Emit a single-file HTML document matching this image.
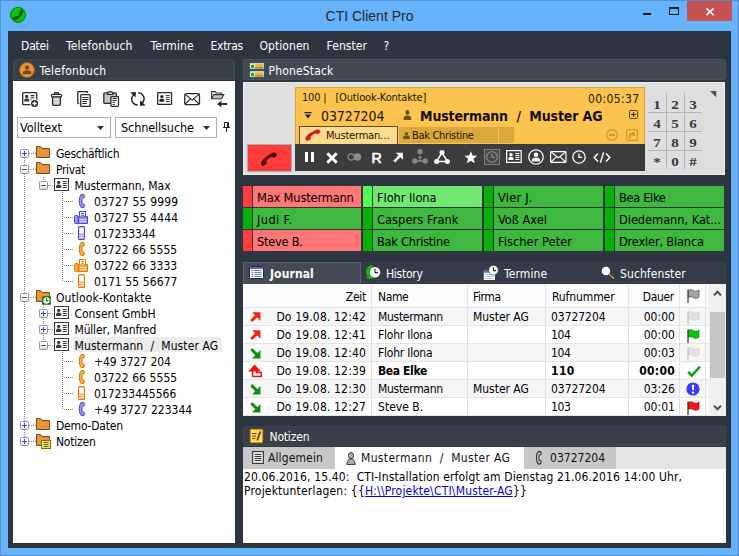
<!DOCTYPE html>
<html lang="de">
<head>
<meta charset="utf-8">
<title>CTI Client Pro</title>
<style>
html,body{margin:0;padding:0;}
body{width:739px;height:556px;position:relative;overflow:hidden;background:#67b3fb;font-family:"DejaVu Sans Condensed","Liberation Sans",sans-serif;font-size:12px;line-height:16px;color:#000;}
.a{position:absolute;white-space:pre;}
.b{position:absolute;}
svg{position:absolute;overflow:visible;}
#frame{left:0;top:0;width:737px;height:554px;border:1px solid #4f90d2;}
#client{left:8px;top:31px;width:723px;height:517px;background:#2d3640;}
.title{left:0;width:739px;top:7px;text-align:center;font-family:"Liberation Sans",sans-serif;font-size:14px;line-height:18px;color:#262626;}
.menu{color:#fff;top:38px;}
.hdr{background:#424952;height:19px;border:1px solid #4a525c;border-radius:2px;}
.hdl{background:#383f49;border-color:#3e4650;}
.hdrt{color:#fff;}
.white{background:#fff;}
.ex{width:7px;height:7px;border:1px solid #969696;background:linear-gradient(180deg,#fff 0,#fff 45%,#dedede 100%);border-radius:1.5px;}
.hd{height:1px;background:repeating-linear-gradient(90deg,#8a8a8a 0 1px,transparent 1px 2px);}
.vd{width:1px;background:repeating-linear-gradient(180deg,#8a8a8a 0 1px,transparent 1px 2px);}
.cb{border:1px solid #abadb3;background:#fff;}
.tr{color:#000;}
.tm{width:108px;height:21px;line-height:23px;padding-left:4px;box-sizing:border-box;font-size:12.7px;color:#000;overflow:hidden;}
.dp{width:18px;text-align:center;font-family:"Liberation Serif","DejaVu Serif",serif;font-weight:bold;font-size:13.5px;line-height:16px;color:#3a3444;transform:scaleX(1.12);}
</style>
</head>
<body>
<div class="b" id="frame"></div>
<div class="a title">CTI Client Pro</div>
<div class="b" id="client"></div>

<!-- SECTION:TITLEBAR -->
<svg style="left:10px;top:7px" width="16" height="16" viewBox="0 0 16 16"><circle cx="8" cy="7.9" r="7.5" fill="#04c804" stroke="#067a06" stroke-width="1"/><path d="M5 11.3 Q10.4 10.8 11.5 5" fill="none" stroke="#045404" stroke-width="2"/><path d="M4.4 11.6 L6.6 10.6 M10.6 6.6 L11.7 4.5" fill="none" stroke="#045404" stroke-width="3.2" stroke-linecap="round"/></svg>
<div class="b" style="left:643px;top:13px;width:8px;height:2px;background:#1a1a1a"></div>
<div class="b" style="left:669px;top:7px;width:8px;height:5px;border:1px solid #1a1a1a;border-top-width:2px"></div>
<div class="b" style="left:687px;top:1px;width:45px;height:20px;background:#c75050"></div>
<svg style="left:706px;top:8px" width="8" height="8" viewBox="0 0 8 8"><path d="M0.4 0.4 L7.6 7.2 M7.6 0.4 L0.4 7.2" stroke="#fff" stroke-width="1.6" fill="none"/></svg>
<!-- SECTION:MENU -->
<div class="a menu" style="letter-spacing:-0.18px;left:21px">Datei</div>
<div class="a menu" style="letter-spacing:0.18px;left:66px">Telefonbuch</div>
<div class="a menu" style="letter-spacing:0.12px;left:150.5px">Termine</div>
<div class="a menu" style="letter-spacing:-0.29px;left:210.5px">Extras</div>
<div class="a menu" style="letter-spacing:0.06px;left:259.5px">Optionen</div>
<div class="a menu" style="letter-spacing:0.09px;left:326.5px">Fenster</div>
<div class="a menu" style="left:383.5px">?</div>

<!-- SECTION:LEFTPANEL -->
<div class="b hdr hdl" style="left:13px;top:59px;width:220px"></div>
<div class="a hdrt" style="letter-spacing:0.21px;left:39.5px;top:63px">Telefonbuch</div>
<div class="b white" style="left:13px;top:81px;width:222px;height:462px"></div>
<svg style="left:19px;top:62px" width="16" height="16" viewBox="0 0 16 16"><circle cx="8" cy="8" r="7.4" fill="#e8943a" stroke="#a8641a" stroke-width="0.9"/><circle cx="8" cy="5.6" r="2.2" fill="#7a4a14"/><path d="M3.8 12.2 V10.6 C3.8 8.8 5.6 8.4 8 8.4 C10.4 8.4 12.2 8.8 12.2 10.6 V12.2 Z" fill="#7a4a14"/></svg>
<!-- toolbar icons -->
<svg style="left:22px;top:92px" width="17" height="16" viewBox="0 0 17 16"><rect x="0.7" y="0.7" width="14" height="12" rx="0.8" fill="#fff" stroke="#2a2a2a" stroke-width="1.3"/><circle cx="4.7" cy="4.5" r="1.7" fill="#333"/><path d="M2.2 9.6 V8.6 C2.2 7 3.4 6.6 4.7 6.6 C6 6.6 7.2 7 7.2 8.6 V9.6 Z" fill="#333"/><path d="M8.6 3.6 H12.4 M8.6 5.8 H12.4 M8.6 8 H10" stroke="#2a2a2a" stroke-width="1.1"/><circle cx="12.6" cy="11.6" r="4.4" fill="#fff"/><circle cx="12.6" cy="11.6" r="3.5" fill="#222"/><path d="M12.6 9.4 V13.8 M10.4 11.6 H14.8" stroke="#fff" stroke-width="1.5"/></svg>
<svg style="left:50px;top:92px" width="13" height="14" viewBox="0 0 13 14"><rect x="4.4" y="0.6" width="4.2" height="2.2" rx="0.6" fill="#ccc" stroke="#2a2a2a" stroke-width="1.1"/><path d="M2.6 4.6 V12 Q2.6 13.4 4 13.4 H9 Q10.4 13.4 10.4 12 V4.6 Z" fill="#d6d6d6" stroke="#2a2a2a" stroke-width="1.3"/><rect x="1.3" y="2.3" width="10.4" height="2.5" rx="1" fill="#fff" stroke="#2a2a2a" stroke-width="1.2"/></svg>
<svg style="left:77px;top:91px" width="15" height="16" viewBox="0 0 15 16"><path d="M10.6 2 V1.4 Q10.6 0.6 9.8 0.6 H1.6 Q0.8 0.6 0.8 1.4 V11.8 Q0.8 12.6 1.6 12.6 H2.2" fill="none" stroke="#2a2a2a" stroke-width="1.3"/><rect x="3.8" y="3.7" width="9.4" height="11.6" rx="0.9" fill="#fff" stroke="#2a2a2a" stroke-width="1.3"/><path d="M5.4 6.5 H11.6 M5.4 8.5 H11.6 M5.4 10.5 H9.8 M5.4 12.5 H9.8" stroke="#2a2a2a" stroke-width="1"/></svg>
<svg style="left:103px;top:91px" width="17" height="16" viewBox="0 0 17 16"><rect x="0.8" y="1.8" width="12.6" height="10.6" rx="1.2" fill="#c2c2c2" stroke="#2a2a2a" stroke-width="1.3"/><path d="M4.4 3.4 Q4.4 0.6 7.2 0.6 Q10 0.6 10 3.4 Z" fill="#fff" stroke="#2a2a2a" stroke-width="1.1"/><rect x="7.9" y="5.6" width="7.6" height="9.8" rx="0.8" fill="#fff" stroke="#2a2a2a" stroke-width="1.3"/><path d="M9.6 7.5 H13.8 M9.6 9.5 H13.8 M9.6 11.5 H11.8 M9.6 13.4 H11.8" stroke="#2a2a2a" stroke-width="1"/></svg>
<svg style="left:130px;top:92px" width="16" height="14" viewBox="0 0 16 14"><path d="M7.6 13.1 C4 12.7 1.4 9.8 1.7 6.6 C1.9 5 2.6 3.8 3.6 3" fill="none" stroke="#262626" stroke-width="1.5"/><path d="M0.2 0.3 L5.9 0 L5.5 5.6 Z" fill="#262626"/><path d="M8.2 0.7 C11.8 1.1 14.4 4 14.1 7.2 C13.9 8.8 13.2 10 12.2 10.8" fill="none" stroke="#262626" stroke-width="1.5"/><path d="M15.6 13.5 L9.9 13.8 L10.3 8.2 Z" fill="#262626"/></svg>
<svg style="left:157px;top:92px" width="16" height="13" viewBox="0 0 16 13"><rect x="0.7" y="0.7" width="13.8" height="11.6" rx="0.6" fill="#fff" stroke="#2a2a2a" stroke-width="1.3"/><circle cx="4.8" cy="4.6" r="1.7" fill="#2a2a2a"/><path d="M2.4 9.8 V8.6 C2.4 7 3.6 6.7 4.8 6.7 C6 6.7 7.2 7 7.2 8.6 V9.8 Z" fill="#2a2a2a"/><path d="M8.8 3.6 H12.6 M8.8 5.6 H12.6 M8.8 7.6 H12.6 M8.8 9.6 H12.6" stroke="#2a2a2a" stroke-width="1"/></svg>
<svg style="left:184px;top:93px" width="17" height="12" viewBox="0 0 17 12"><rect x="0.7" y="0.7" width="14.8" height="11" rx="1.6" fill="#fff" stroke="#2a2a2a" stroke-width="1.3"/><path d="M1.2 1.4 L8.1 7 L15 1.4 M1.2 11 L6.4 5.8 M15 11 L9.8 5.8" fill="none" stroke="#2a2a2a" stroke-width="1.1"/></svg>
<svg style="left:211px;top:91px" width="17" height="16" viewBox="0 0 17 16"><path d="M0.6 7.8 V0.6 H4.2 L5.4 2 H10.6 V3.6" fill="#fff" stroke="#333" stroke-width="1.1"/><path d="M0.6 7.8 L2.8 3.6 H12.8 L10.6 7.8 Z" fill="#c8c8c8" stroke="#333" stroke-width="1.1"/><path d="M16.2 13 H9.4" stroke="#222" stroke-width="1.8"/><path d="M6.2 13 L10.4 9.8 V16.2 Z" fill="#222"/></svg>
<!-- combos -->
<div class="b cb" style="left:17px;top:117px;width:92px;height:19px"></div>
<div class="a" style="letter-spacing:-0.04px;left:20px;top:120px;font-size:12.6px">Volltext</div>
<svg style="left:97px;top:126px" width="7" height="4" viewBox="0 0 7 4"><path d="M0 0 H7 L3.5 4 Z" fill="#333"/></svg>
<div class="b cb" style="left:115px;top:117px;width:100px;height:19px"></div>
<div class="a" style="letter-spacing:-0.14px;left:121px;top:120px;font-size:12.6px">Schnellsuche</div>
<svg style="left:203px;top:126px" width="7" height="4" viewBox="0 0 7 4"><path d="M0 0 H7 L3.5 4 Z" fill="#333"/></svg>
<svg style="left:222px;top:122px" width="9" height="10" viewBox="0 0 9 10"><path d="M2.5 0.5 H6.5 M2.5 0.5 V5 M6.5 0.5 V5 M5.5 0.5 V5 M1 5.5 H8 M4.5 5.5 V10" fill="none" stroke="#222" stroke-width="1"/></svg>
<!-- tree -->
<div class="b vd" style="left:24px;top:158px;height:279px"></div>
<div class="b vd" style="left:43px;top:177px;height:4px"></div>
<div class="b vd" style="left:62px;top:192px;height:90px"></div>
<div class="b vd" style="left:43px;top:305px;height:44px"></div>
<div class="b vd" style="left:62px;top:352px;height:58px"></div>
<div class="b hd" style="left:29px;top:153px;width:7px"></div>
<div class="b ex" style="left:20px;top:149px"></div><div class="b" style="left:22px;top:153px;width:5px;height:1px;background:#2a50a8"></div><div class="b" style="left:24px;top:151px;width:1px;height:5px;background:#2a50a8"></div>
<svg style="left:36px;top:146px" width="15" height="13" viewBox="0 0 15 13"><path d="M0.5 0.5 H4.6 L6.2 2.5 H13.5 V11.5 H0.5 Z" fill="#e8943a" stroke="#7a4a14" stroke-width="1"/></svg>
<div class="a tr" style="letter-spacing:-0.28px;left:56px;top:146px">Geschäftlich</div>
<div class="b hd" style="left:29px;top:169px;width:7px"></div>
<div class="b ex" style="left:20px;top:165px"></div><div class="b" style="left:22px;top:169px;width:5px;height:1px;background:#2a50a8"></div>
<svg style="left:36px;top:162px" width="15" height="13" viewBox="0 0 15 13"><path d="M0.5 0.5 H4.6 L6.2 2.5 H13.5 V11.5 H0.5 Z" fill="#e8943a" stroke="#7a4a14" stroke-width="1"/></svg>
<div class="a tr" style="letter-spacing:-0.34px;left:56px;top:162px">Privat</div>
<div class="b hd" style="left:48px;top:185px;width:6px"></div>
<div class="b ex" style="left:39px;top:181px"></div><div class="b" style="left:41px;top:185px;width:5px;height:1px;background:#2a50a8"></div>
<svg style="left:54px;top:178px" width="15" height="13" viewBox="0 0 15 13"><rect x="0.5" y="0.5" width="14" height="12" fill="#fff" stroke="#3a3a3a" stroke-width="1"/><circle cx="4.7" cy="4.4" r="1.7" fill="#3a3a3a"/><path d="M2 10 V8.8 C2 7.2 3.4 6.6 4.7 6.6 C6 6.6 7.4 7.2 7.4 8.8 V10 Z" fill="#3a3a3a"/><path d="M8.8 3.5 H12.8 M8.8 5.5 H12.8 M8.8 7.5 H12.8 M8.8 9.5 H12.8" stroke="#3a3a3a" stroke-width="1"/></svg>
<div class="a tr" style="letter-spacing:-0.06px;left:74.5px;top:178px">Mustermann, Max</div>
<div class="b hd" style="left:64px;top:201px;width:10px"></div>
<svg style="left:78px;top:194px" width="7" height="14" viewBox="0 0 7 14"><path d="M3.2 0.5 H5.4 Q6.3 0.5 6.3 1.3 V3.2 Q6.3 3.9 5.5 4 Q4 4.2 4 5.6 V8.4 Q4 9.8 5.5 10 Q6.3 10.1 6.3 10.8 V12.7 Q6.3 13.5 5.4 13.5 H3.2 Q1.3 11.6 1.3 7 Q1.3 2.4 3.2 0.5 Z" fill="#9a9af2" stroke="#4848c8" stroke-width="1"/></svg>
<div class="a tr" style="letter-spacing:0.14px;left:94px;top:194px">03727 55 9999</div>
<div class="b hd" style="left:64px;top:217px;width:10px"></div>
<svg style="left:74px;top:211px" width="14" height="13" viewBox="0 0 14 13"><path d="M4.5 5.5 H13.5 V12.5 H4.5 Z" fill="#9a9af2" stroke="#4848c8"/><rect x="0.5" y="4.5" width="3.6" height="8" rx="1" fill="#9a9af2" stroke="#4848c8"/><rect x="5.5" y="0.5" width="6" height="5.4" fill="#fff" stroke="#4848c8"/><path d="M7 2.5 H10 M7 4.3 H10" stroke="#4848c8" stroke-width="1"/><path d="M6.4 8.5 h1.2 m1 0 h1.2 m1 0 h1.2 M6.4 10.6 h1.2 m1 0 h1.2 m1 0 h1.2" stroke="#fff" stroke-width="1.2"/></svg>
<div class="a tr" style="letter-spacing:0.14px;left:94px;top:210px">03727 55 4444</div>
<div class="b hd" style="left:64px;top:233px;width:10px"></div>
<svg style="left:78px;top:226px" width="7" height="14" viewBox="0 0 7 14"><rect x="0.5" y="0.5" width="6" height="13" rx="0.6" fill="#9a9af2" stroke="#4848c8"/><rect x="1.3" y="1.6" width="4.4" height="6" fill="#fff"/><path d="M1.4 9.6 h1.1 m0.5 0 h1.1 m0.5 0 h1.1 M1.4 11.6 h1.1 m0.5 0 h1.1 m0.5 0 h1.1" stroke="#fff" stroke-width="1.1"/></svg>
<div class="a tr" style="letter-spacing:-0.02px;left:94px;top:226px">017233344</div>
<div class="b hd" style="left:64px;top:249px;width:10px"></div>
<svg style="left:78px;top:242px" width="7" height="14" viewBox="0 0 7 14"><path d="M3.2 0.5 H5.4 Q6.3 0.5 6.3 1.3 V3.2 Q6.3 3.9 5.5 4 Q4 4.2 4 5.6 V8.4 Q4 9.8 5.5 10 Q6.3 10.1 6.3 10.8 V12.7 Q6.3 13.5 5.4 13.5 H3.2 Q1.3 11.6 1.3 7 Q1.3 2.4 3.2 0.5 Z" fill="#f9aa4c" stroke="#e07a00" stroke-width="1"/></svg>
<div class="a tr" style="letter-spacing:0.07px;left:94px;top:242px">03722 66 5555</div>
<div class="b hd" style="left:64px;top:265px;width:10px"></div>
<svg style="left:74px;top:259px" width="14" height="13" viewBox="0 0 14 13"><path d="M4.5 5.5 H13.5 V12.5 H4.5 Z" fill="#f9aa4c" stroke="#e07a00"/><rect x="0.5" y="4.5" width="3.6" height="8" rx="1" fill="#f9aa4c" stroke="#e07a00"/><rect x="5.5" y="0.5" width="6" height="5.4" fill="#fff" stroke="#e07a00"/><path d="M7 2.5 H10 M7 4.3 H10" stroke="#e07a00" stroke-width="1"/><path d="M6.4 8.5 h1.2 m1 0 h1.2 m1 0 h1.2 M6.4 10.6 h1.2 m1 0 h1.2 m1 0 h1.2" stroke="#fff" stroke-width="1.2"/></svg>
<div class="a tr" style="letter-spacing:0.07px;left:94px;top:258px">03722 66 3333</div>
<div class="b hd" style="left:64px;top:281px;width:10px"></div>
<svg style="left:78px;top:274px" width="7" height="14" viewBox="0 0 7 14"><rect x="0.5" y="0.5" width="6" height="13" rx="0.6" fill="#f9aa4c" stroke="#e07a00"/><rect x="1.3" y="1.6" width="4.4" height="6" fill="#fff"/><path d="M1.4 9.6 h1.1 m0.5 0 h1.1 m0.5 0 h1.1 M1.4 11.6 h1.1 m0.5 0 h1.1 m0.5 0 h1.1" stroke="#fff" stroke-width="1.1"/></svg>
<div class="a tr" style="letter-spacing:0.09px;left:94px;top:274px">0171 55 56677</div>
<div class="b hd" style="left:29px;top:297px;width:7px"></div>
<div class="b ex" style="left:20px;top:293px"></div><div class="b" style="left:22px;top:297px;width:5px;height:1px;background:#2a50a8"></div>
<svg style="left:36px;top:290px" width="15" height="13" viewBox="0 0 15 13"><path d="M0.5 0.5 H4.6 L6.2 2.5 H13.5 V11.5 H0.5 Z" fill="#e8943a" stroke="#7a4a14" stroke-width="1"/></svg>
<svg style="left:42px;top:296px" width="9" height="9" viewBox="0 0 9 9"><rect x="0.2" y="0.2" width="8.6" height="8.6" rx="0.6" fill="#0c6c1c"/><circle cx="4.5" cy="4.5" r="3.2" fill="#e4ffe4"/><path d="M4.5 2.4 V4.9 H6.4" stroke="#0a3a0a" stroke-width="1" fill="none"/></svg>
<div class="a tr" style="letter-spacing:0.10px;left:56px;top:290px">Outlook-Kontakte</div>
<div class="b hd" style="left:48px;top:313px;width:6px"></div>
<div class="b ex" style="left:39px;top:309px"></div><div class="b" style="left:41px;top:313px;width:5px;height:1px;background:#2a50a8"></div><div class="b" style="left:43px;top:311px;width:1px;height:5px;background:#2a50a8"></div>
<svg style="left:54px;top:306px" width="15" height="13" viewBox="0 0 15 13"><rect x="0.5" y="0.5" width="14" height="12" fill="#fff" stroke="#3a3a3a" stroke-width="1"/><circle cx="4.7" cy="4.4" r="1.7" fill="#3a3a3a"/><path d="M2 10 V8.8 C2 7.2 3.4 6.6 4.7 6.6 C6 6.6 7.4 7.2 7.4 8.8 V10 Z" fill="#3a3a3a"/><path d="M8.8 3.5 H12.8 M8.8 5.5 H12.8 M8.8 7.5 H12.8 M8.8 9.5 H12.8" stroke="#3a3a3a" stroke-width="1"/></svg>
<div class="a tr" style="letter-spacing:-0.04px;left:74.5px;top:306px">Consent GmbH</div>
<div class="b hd" style="left:48px;top:329px;width:6px"></div>
<div class="b ex" style="left:39px;top:325px"></div><div class="b" style="left:41px;top:329px;width:5px;height:1px;background:#2a50a8"></div><div class="b" style="left:43px;top:327px;width:1px;height:5px;background:#2a50a8"></div>
<svg style="left:54px;top:322px" width="15" height="13" viewBox="0 0 15 13"><rect x="0.5" y="0.5" width="14" height="12" fill="#fff" stroke="#3a3a3a" stroke-width="1"/><circle cx="4.7" cy="4.4" r="1.7" fill="#3a3a3a"/><path d="M2 10 V8.8 C2 7.2 3.4 6.6 4.7 6.6 C6 6.6 7.4 7.2 7.4 8.8 V10 Z" fill="#3a3a3a"/><path d="M8.8 3.5 H12.8 M8.8 5.5 H12.8 M8.8 7.5 H12.8 M8.8 9.5 H12.8" stroke="#3a3a3a" stroke-width="1"/></svg>
<div class="a tr" style="letter-spacing:-0.18px;left:74.5px;top:322px">Müller, Manfred</div>
<div class="b hd" style="left:48px;top:345px;width:6px"></div>
<div class="b ex" style="left:39px;top:341px"></div><div class="b" style="left:41px;top:345px;width:5px;height:1px;background:#2a50a8"></div>
<svg style="left:54px;top:338px" width="15" height="13" viewBox="0 0 15 13"><rect x="0.5" y="0.5" width="14" height="12" fill="#fff" stroke="#3a3a3a" stroke-width="1"/><circle cx="4.7" cy="4.4" r="1.7" fill="#3a3a3a"/><path d="M2 10 V8.8 C2 7.2 3.4 6.6 4.7 6.6 C6 6.6 7.4 7.2 7.4 8.8 V10 Z" fill="#3a3a3a"/><path d="M8.8 3.5 H12.8 M8.8 5.5 H12.8 M8.8 7.5 H12.8 M8.8 9.5 H12.8" stroke="#3a3a3a" stroke-width="1"/></svg>
<div class="b" style="left:73px;top:337px;width:149px;height:15px;background:#ececec"></div>
<div class="a tr" style="letter-spacing:0.11px;left:74.5px;top:338px">Mustermann  /  Muster AG</div>
<div class="b hd" style="left:64px;top:361px;width:10px"></div>
<svg style="left:78px;top:354px" width="7" height="14" viewBox="0 0 7 14"><path d="M3.2 0.5 H5.4 Q6.3 0.5 6.3 1.3 V3.2 Q6.3 3.9 5.5 4 Q4 4.2 4 5.6 V8.4 Q4 9.8 5.5 10 Q6.3 10.1 6.3 10.8 V12.7 Q6.3 13.5 5.4 13.5 H3.2 Q1.3 11.6 1.3 7 Q1.3 2.4 3.2 0.5 Z" fill="#f9aa4c" stroke="#e07a00" stroke-width="1"/></svg>
<div class="a tr" style="letter-spacing:-0.08px;left:94px;top:354px">+49 3727 204</div>
<div class="b hd" style="left:64px;top:377px;width:10px"></div>
<svg style="left:78px;top:370px" width="7" height="14" viewBox="0 0 7 14"><path d="M3.2 0.5 H5.4 Q6.3 0.5 6.3 1.3 V3.2 Q6.3 3.9 5.5 4 Q4 4.2 4 5.6 V8.4 Q4 9.8 5.5 10 Q6.3 10.1 6.3 10.8 V12.7 Q6.3 13.5 5.4 13.5 H3.2 Q1.3 11.6 1.3 7 Q1.3 2.4 3.2 0.5 Z" fill="#f9aa4c" stroke="#e07a00" stroke-width="1"/></svg>
<div class="a tr" style="letter-spacing:0.07px;left:94px;top:370px">03722 66 5555</div>
<div class="b hd" style="left:64px;top:393px;width:10px"></div>
<svg style="left:78px;top:386px" width="7" height="14" viewBox="0 0 7 14"><rect x="0.5" y="0.5" width="6" height="13" rx="0.6" fill="#f9aa4c" stroke="#e07a00"/><rect x="1.3" y="1.6" width="4.4" height="6" fill="#fff"/><path d="M1.4 9.6 h1.1 m0.5 0 h1.1 m0.5 0 h1.1 M1.4 11.6 h1.1 m0.5 0 h1.1 m0.5 0 h1.1" stroke="#fff" stroke-width="1.1"/></svg>
<div class="a tr" style="letter-spacing:-0.01px;left:94px;top:386px">017233445566</div>
<div class="b hd" style="left:64px;top:409px;width:10px"></div>
<svg style="left:78px;top:402px" width="7" height="14" viewBox="0 0 7 14"><path d="M3.2 0.5 H5.4 Q6.3 0.5 6.3 1.3 V3.2 Q6.3 3.9 5.5 4 Q4 4.2 4 5.6 V8.4 Q4 9.8 5.5 10 Q6.3 10.1 6.3 10.8 V12.7 Q6.3 13.5 5.4 13.5 H3.2 Q1.3 11.6 1.3 7 Q1.3 2.4 3.2 0.5 Z" fill="#9a9af2" stroke="#4848c8" stroke-width="1"/></svg>
<div class="a tr" style="letter-spacing:-0.01px;left:94px;top:402px">+49 3727 223344</div>
<div class="b hd" style="left:29px;top:425px;width:7px"></div>
<div class="b ex" style="left:20px;top:421px"></div><div class="b" style="left:22px;top:425px;width:5px;height:1px;background:#2a50a8"></div><div class="b" style="left:24px;top:423px;width:1px;height:5px;background:#2a50a8"></div>
<svg style="left:36px;top:418px" width="15" height="13" viewBox="0 0 15 13"><path d="M0.5 0.5 H4.6 L6.2 2.5 H13.5 V11.5 H0.5 Z" fill="#e8943a" stroke="#7a4a14" stroke-width="1"/></svg>
<div class="a tr" style="letter-spacing:-0.19px;left:56px;top:418px">Demo-Daten</div>
<div class="b hd" style="left:29px;top:441px;width:7px"></div>
<div class="b ex" style="left:20px;top:437px"></div><div class="b" style="left:22px;top:441px;width:5px;height:1px;background:#2a50a8"></div><div class="b" style="left:24px;top:439px;width:1px;height:5px;background:#2a50a8"></div>
<svg style="left:36px;top:434px" width="15" height="13" viewBox="0 0 15 13"><path d="M0.5 0.5 H4.6 L6.2 2.5 H13.5 V11.5 H0.5 Z" fill="#e8943a" stroke="#7a4a14" stroke-width="1"/></svg>
<svg style="left:41px;top:440px" width="10" height="9" viewBox="0 0 10 9"><rect x="0.5" y="0.5" width="9" height="8" fill="#f6e478" stroke="#7a6a08"/><path d="M2.5 2.5 H7.5 M2.5 4.5 H7.5 M2.5 6.5 H7.5" stroke="#6a5a00" stroke-width="1"/></svg>
<div class="a tr" style="letter-spacing:-0.22px;left:56px;top:434px">Notizen</div>

<!-- SECTION:PHONESTACK -->
<div class="b hdr" style="left:243px;top:59px;width:481px"></div>
<div class="a hdrt" style="letter-spacing:0.17px;left:268.5px;top:63px">PhoneStack</div>
<svg style="left:249px;top:62px" width="16" height="16" viewBox="0 0 16 16"><rect x="0.7" y="0.9" width="14.4" height="6.2" fill="#e6e6e6" stroke="#3a3a3a" stroke-width="0.5"/><rect x="0.7" y="8.9" width="14.4" height="6.2" fill="#e6e6e6" stroke="#3a3a3a" stroke-width="0.5"/><rect x="2" y="3" width="3" height="3" fill="#10b010"/><rect x="2" y="11" width="3" height="3" fill="#10b010"/><rect x="6" y="2.1" width="8" height="3.4" fill="#f4b632"/><rect x="6" y="10.1" width="8" height="3.4" fill="#f4b632"/><rect x="6" y="5.5" width="8" height="0.8" fill="#5a4a2a"/><rect x="6" y="13.5" width="8" height="0.8" fill="#5a4a2a"/></svg>
<div class="b" style="left:243px;top:82px;width:482px;height:93px;background:#dedede;box-shadow:inset 0 0 0 1px #ededed"></div>
<div class="b" style="left:295px;top:87px;width:348px;height:57px;background:#fcc44e;border:1px solid #dca436;border-bottom:none"></div>
<div class="a" style="letter-spacing:-0.17px;left:302px;top:91px;font-size:11px;line-height:14px;color:#1a1408">100 |   [Outlook-Kontakte]</div>
<div class="a" style="letter-spacing:0.39px;left:588px;top:91px;font-size:12px;line-height:16px;color:#1a1408">00:05:37</div>
<svg style="left:304px;top:112px" width="8" height="7" viewBox="0 0 8 7"><path d="M0.4 0 H7.6 V1.2 H0.4 Z M0.8 2.4 H7.2 L4 6.6 Z" fill="#2a2008"/></svg>
<div class="a" style="letter-spacing:-0.10px;left:321px;top:107px;font-size:14px;line-height:18px;color:#1a1408">03727204</div>
<svg style="left:403px;top:110px" width="9" height="10" viewBox="0 0 9 10"><ellipse cx="4.4" cy="2.5" rx="2" ry="2.4" fill="#6e4e12"/><path d="M0.6 10 V8.4 C0.6 6.4 2.2 5.6 4.4 5.6 C6.6 5.6 8.2 6.4 8.2 8.4 V10 Z" fill="#6e4e12"/></svg>
<div class="a" style="letter-spacing:-0.14px;left:420px;top:107px;font-size:14px;line-height:18px;font-weight:bold;color:#120c00">Mustermann  /  Muster AG</div>
<svg style="left:629px;top:110px" width="9" height="9" viewBox="0 0 9 9"><rect x="0.5" y="0.5" width="8" height="8" rx="1.2" fill="none" stroke="#54441a"/><path d="M4.5 2.2 V6.8 M2.2 4.5 H6.8" stroke="#1a1408" stroke-width="1.1"/></svg>
<!-- call tabs -->
<div class="b" style="left:299px;top:126px;width:97px;height:17px;background:#ffdb8e;border:1px solid #5a4a28;border-bottom:none"></div>
<svg style="left:305px;top:129px" width="16" height="12" viewBox="0 0 16 12"><path transform="translate(-0.4,0.4) scale(0.92,0.8)" d="M13.9 0.4 C15.6 0.4 17 1.4 17 2.7 C17 4.2 15.4 5.6 13.9 5.6 C13 5.6 12.4 5 11.6 4.8 C9.6 5.8 7.2 7.6 6.1 9.5 C6.4 10 6.6 10.5 6.6 11.1 C6.2 12.6 4.4 13.9 2.9 13.9 C1.8 13.9 1.1 12.6 1.1 11.4 C1.1 10.2 1.6 9.2 2.2 8.5 C3.6 6.6 5.4 5.2 7.4 4 C9 3 10.6 1.6 12 1 C12.6 0.6 13.2 0.4 13.9 0.4 Z" fill="#cc2020" stroke="#a81818" stroke-width="0.5"/></svg>
<div class="a" style="letter-spacing:-0.19px;left:326px;top:129px;font-size:11px;line-height:14px;color:#1a1408">Musterman…</div>
<div class="b" style="left:399px;top:127px;width:99px;height:16px;background:#dca73c"></div>
<svg style="left:403px;top:132px" width="7" height="7" viewBox="0 0 7 7"><circle cx="3.5" cy="1.7" r="1.6" fill="#6e4e12"/><path d="M0.2 7 V5.6 C0.2 4 1.4 3.6 3.5 3.6 C5.6 3.6 6.8 4 6.8 5.6 V7 Z" fill="#6e4e12"/></svg>
<div class="a" style="letter-spacing:-0.33px;left:412px;top:129px;font-size:11px;line-height:14px;color:#1a1408">Bak Christine</div>
<div class="b" style="left:499px;top:127px;width:15px;height:16px;background:#dca73c"></div>
<svg style="left:606px;top:129px" width="12" height="12" viewBox="0 0 12 12"><circle cx="6" cy="6" r="5.3" fill="none" stroke="#cb9730" stroke-width="1.3"/><path d="M3 6 H9" stroke="#cb9730" stroke-width="2"/></svg>
<svg style="left:626px;top:129px" width="12" height="12" viewBox="0 0 12 12"><rect x="0.6" y="0.6" width="10.8" height="10.8" rx="2" fill="none" stroke="#cb9730" stroke-width="1.2"/><path d="M3.8 9.6 V6.8 Q3.8 5 5.4 5 H7" fill="none" stroke="#cb9730" stroke-width="2"/><path d="M6.4 2.2 L9.8 5 L6.4 7.8 Z" fill="#cb9730"/></svg>
<!-- dark toolbar -->
<div class="b" style="left:295px;top:144px;width:350px;height:27px;background:#3c3c3c"></div>
<div class="b" style="left:247px;top:144px;width:43px;height:26px;background:#ff3b3b;border:1px solid #a8b0b0"></div>
<svg style="left:260px;top:152px" width="18" height="15" viewBox="0 0 18 15"><path d="M13.9 0.4 C15.6 0.4 17 1.4 17 2.7 C17 4.2 15.4 5.6 13.9 5.6 C13 5.6 12.4 5 11.6 4.8 C9.6 5.8 7.2 7.6 6.1 9.5 C6.4 10 6.6 10.5 6.6 11.1 C6.2 12.6 4.4 13.9 2.9 13.9 C1.8 13.9 1.1 12.6 1.1 11.4 C1.1 10.2 1.6 9.2 2.2 8.5 C3.6 6.6 5.4 5.2 7.4 4 C9 3 10.6 1.6 12 1 C12.6 0.6 13.2 0.4 13.9 0.4 Z" fill="#4e0e0e"/></svg>
<div class="b" style="left:305px;top:152px;width:3px;height:10px;background:#fff"></div>
<div class="b" style="left:311px;top:152px;width:3px;height:10px;background:#fff"></div>
<svg style="left:325.5px;top:151.5px" width="12" height="12" viewBox="0 0 11 11"><path d="M1.2 1.2 L9.8 9.8 M9.8 1.2 L1.2 9.8" stroke="#fff" stroke-width="2.7" fill="none"/></svg>
<svg style="left:347px;top:153px" width="15" height="8" viewBox="0 0 15 8"><circle cx="10.4" cy="4" r="3.8" fill="#8c8c8c"/><circle cx="4.2" cy="4" r="3.2" fill="#3c3c3c" stroke="#8c8c8c" stroke-width="1.2"/></svg>
<div class="a" style="left:371.5px;top:149px;font-family:'Liberation Sans',sans-serif;font-size:14.2px;line-height:18px;color:#fff;-webkit-text-stroke:0.6px #fff">R</div>
<svg style="left:393px;top:152px" width="10.6" height="10.6" viewBox="0 0 10 10"><path d="M1.2 9 L7.4 2.8" stroke="#fff" stroke-width="2.4" fill="none"/><path d="M2.6 0.6 H9.4 V7.4 Z" fill="#fff"/></svg>
<svg style="left:412px;top:149px" width="16" height="15" viewBox="0 0 16 15"><circle cx="8" cy="2.8" r="2.7" fill="#868686"/><circle cx="2.8" cy="12" r="2.7" fill="#868686"/><circle cx="13.2" cy="12" r="2.7" fill="#868686"/><path d="M2.6 12 H13.4 M8 12 V8.4" stroke="#868686" stroke-width="1.3"/><path d="M5.6 9 L8 6.2 L10.4 9 Z" fill="#868686"/></svg>
<svg style="left:434px;top:150px" width="16" height="14" viewBox="0 0 16 14"><path d="M8 2.6 L2.6 11.4 H13.4 Z" fill="none" stroke="#fff" stroke-width="1.5"/><circle cx="8" cy="2.6" r="2.5" fill="#fff"/><circle cx="2.6" cy="11.4" r="2.5" fill="#fff"/><circle cx="13.4" cy="11.4" r="2.5" fill="#fff"/></svg>
<svg style="left:463.5px;top:150.5px" width="13.6" height="12.6" viewBox="0 0 13 12"><path d="M6.5 0.2 L8.1 4.3 L12.6 4.5 L9.1 7.3 L10.3 11.6 L6.5 9.2 L2.7 11.6 L3.9 7.3 L0.4 4.5 L4.9 4.3 Z" fill="#fff"/></svg>
<svg style="left:484px;top:149px" width="16" height="16" viewBox="0 0 16 16"><rect x="0.5" y="0.5" width="15" height="15" fill="#474747" stroke="#848484"/><circle cx="8" cy="8" r="5.4" fill="none" stroke="#848484" stroke-width="1.4"/><path d="M8 4.6 V8.4 H11" fill="none" stroke="#848484" stroke-width="1.4"/></svg>
<svg style="left:506px;top:150px" width="16" height="13" viewBox="0 0 16 13"><rect x="0.6" y="0.6" width="14.6" height="11.8" fill="none" stroke="#fff" stroke-width="1.2"/><circle cx="5" cy="4.8" r="1.8" fill="#fff"/><path d="M2.4 10 V9 C2.4 7.3 3.6 7 5 7 C6.4 7 7.6 7.3 7.6 9 V10 Z" fill="#fff"/><path d="M9.4 3.5 H13.4 M9.4 5.5 H13.4 M9.4 7.5 H13.4 M9.4 9.5 H13.4" stroke="#fff" stroke-width="1"/></svg>
<svg style="left:528px;top:149px" width="16" height="16" viewBox="0 0 16 16"><circle cx="8" cy="8" r="7.2" fill="none" stroke="#fff" stroke-width="1.3"/><circle cx="8" cy="5.8" r="2.3" fill="#fff"/><path d="M3.8 12.4 V11.4 C3.8 9.2 5.6 8.8 8 8.8 C10.4 8.8 12.2 9.2 12.2 11.4 V12.4 Z" fill="#fff"/></svg>
<svg style="left:550px;top:151px" width="17" height="12" viewBox="0 0 17 12"><rect x="0.6" y="0.6" width="15.4" height="10.8" rx="0.8" fill="none" stroke="#fff" stroke-width="1.2"/><path d="M1 1 L8.3 6.8 L15.6 1 M1 11 L6.6 5.6 M15.6 11 L10 5.6" fill="none" stroke="#fff" stroke-width="1.1"/></svg>
<svg style="left:572px;top:150px" width="14" height="14" viewBox="0 0 14 14"><circle cx="7" cy="7" r="6.2" fill="none" stroke="#fff" stroke-width="1.3"/><path d="M7 3.4 V7.4 H10.2" fill="none" stroke="#fff" stroke-width="1.3"/></svg>
<svg style="left:593px;top:152px" width="18" height="11" viewBox="0 0 18 11"><path d="M5 1.6 L1.2 5.5 L5 9.4 M13 1.6 L16.8 5.5 L13 9.4 M10.6 0.4 L7.4 10.6" fill="none" stroke="#fff" stroke-width="1.5"/></svg>
<!-- dialpad -->
<div class="b" style="left:648px;top:112px;width:54px;height:1px;background:#b4b4b4"></div>
<div class="b" style="left:648px;top:131px;width:54px;height:1px;background:#b4b4b4"></div>
<div class="b" style="left:648px;top:150px;width:54px;height:1px;background:#b4b4b4"></div>
<div class="b" style="left:666px;top:93px;width:1px;height:76px;background:#b4b4b4"></div>
<div class="b" style="left:684px;top:93px;width:1px;height:76px;background:#b4b4b4"></div>
<div class="a dp" style="left:648px;top:97px">1</div><div class="a dp" style="left:666px;top:97px">2</div><div class="a dp" style="left:684px;top:97px">3</div>
<div class="a dp" style="left:648px;top:116px">4</div><div class="a dp" style="left:666px;top:116px">5</div><div class="a dp" style="left:684px;top:116px">6</div>
<div class="a dp" style="left:648px;top:135px">7</div><div class="a dp" style="left:666px;top:135px">8</div><div class="a dp" style="left:684px;top:135px">9</div>
<div class="a dp" style="left:648px;top:154px">*</div><div class="a dp" style="left:666px;top:154px">0</div><div class="a dp" style="left:684px;top:154px">#</div>
<svg style="left:710px;top:91px" width="7" height="7" viewBox="0 0 7 7"><path d="M0.6 0.4 H7 V6.8 Z" fill="#fff"/><path d="M0 0 H6.4 V6.4 Z" fill="#505050"/></svg>
<!-- SECTION:TEAM -->
<div class="b" style="left:243px;top:186px;width:9px;height:21px;background:#ff3e3e"></div>
<div class="a tm" style="letter-spacing:-0.15px;left:253px;top:186px;width:108px;background:#ff7676">Max Mustermann</div>
<div class="b" style="left:363px;top:186px;width:9px;height:21px;background:#52fa52"></div>
<div class="a tm" style="letter-spacing:-0.05px;left:373px;top:186px;width:109px;background:#72e872">Flohr Ilona</div>
<div class="b" style="left:484px;top:186px;width:9px;height:21px;background:#08b008"></div>
<div class="a tm" style="letter-spacing:0.24px;left:494px;top:186px;width:109px;background:#3eb83e">Vier J.</div>
<div class="b" style="left:605px;top:186px;width:9px;height:21px;background:#08b008"></div>
<div class="a tm" style="letter-spacing:-0.32px;left:615px;top:186px;width:109px;background:#3eb83e">Bea Elke</div>
<div class="b" style="left:243px;top:208px;width:9px;height:21px;background:#08b008"></div>
<div class="a tm" style="letter-spacing:0.39px;left:253px;top:208px;width:108px;background:#3eb83e">Judi F.</div>
<div class="b" style="left:363px;top:208px;width:9px;height:21px;background:#08b008"></div>
<div class="a tm" style="letter-spacing:0.07px;left:373px;top:208px;width:109px;background:#3eb83e">Caspers Frank</div>
<div class="b" style="left:484px;top:208px;width:9px;height:21px;background:#08b008"></div>
<div class="a tm" style="letter-spacing:-0.01px;left:494px;top:208px;width:109px;background:#3eb83e">Voß Axel</div>
<div class="b" style="left:605px;top:208px;width:9px;height:21px;background:#08b008"></div>
<div class="a tm" style="letter-spacing:-0.04px;left:615px;top:208px;width:109px;background:#3eb83e">Diedemann, Kat...</div>
<div class="b" style="left:243px;top:230px;width:9px;height:21px;background:#ff3e3e"></div>
<div class="a tm" style="letter-spacing:-0.24px;left:253px;top:230px;width:108px;background:#ff7676">Steve B.</div>
<div class="b" style="left:363px;top:230px;width:9px;height:21px;background:#08b008"></div>
<div class="a tm" style="letter-spacing:-0.25px;left:373px;top:230px;width:109px;background:#3eb83e">Bak Christine</div>
<div class="b" style="left:484px;top:230px;width:9px;height:21px;background:#08b008"></div>
<div class="a tm" style="letter-spacing:0.06px;left:494px;top:230px;width:109px;background:#3eb83e">Fischer Peter</div>
<div class="b" style="left:605px;top:230px;width:9px;height:21px;background:#08b008"></div>
<div class="a tm" style="letter-spacing:-0.17px;left:615px;top:230px;width:109px;background:#3eb83e">Drexler, Bianca</div>
<div class="b" style="left:243px;top:262px;width:481px;height:21px;background:#343c47;border:1px solid #3b434e;border-bottom:none"></div>
<div class="b" style="left:243px;top:262px;width:116px;height:21px;background:#434a54;border:1px solid #59626e;border-bottom:none"></div>
<svg style="left:249px;top:266px" width="15" height="13" viewBox="0 0 15 13"><rect x="0.5" y="0.5" width="14" height="12" rx="1" fill="#fff" stroke="#222a34" stroke-width="1"/><rect x="1" y="1" width="13" height="2" fill="#4a6cd4"/><path d="M2.4 4.5 H4.2 M5.4 4.5 H12.6 M2.4 6.5 H4.2 M5.4 6.5 H12.6 M2.4 8.5 H4.2 M5.4 8.5 H12.6 M2.4 10.5 H4.2 M5.4 10.5 H12.6" stroke="#6a7aa0" stroke-width="1"/></svg>
<div class="a" style="letter-spacing:0.11px;left:270px;top:266px;color:#fff;font-weight:bold">Journal</div>
<svg style="left:366px;top:265px" width="16" height="15" viewBox="0 0 16 15"><path d="M6.4 1.6 C3 1.8 1.2 4.6 1.6 7.6 C1.8 9.4 2.6 10.8 4 11.8" fill="none" stroke="#0cc00c" stroke-width="3"/><path d="M0 13.2 L7 13.8 L5.6 8 Z" fill="#0cc00c"/><circle cx="9" cy="7.3" r="5.3" fill="#fff"/><path d="M9 3.6 V7.6 H12" fill="none" stroke="#222" stroke-width="1.1"/></svg>
<div class="a" style="letter-spacing:-0.26px;left:386px;top:266px;color:#fff">History</div>
<svg style="left:483px;top:265px" width="16" height="16" viewBox="0 0 16 16"><rect x="0.8" y="5.8" width="11.2" height="9.2" fill="#fff"/><rect x="0.8" y="5.8" width="11.2" height="2" fill="#4a70d8"/><path d="M2.4 9.5 H10.6 M2.4 11.5 H10.6 M2.4 13.5 H10.6" stroke="#5a7ad0" stroke-width="1" stroke-dasharray="1 1"/><circle cx="10.5" cy="5.2" r="4.8" fill="#fff" stroke="#2d3640" stroke-width="0.6"/><path d="M10.5 2.2 V5.6 H13" fill="none" stroke="#222" stroke-width="1.1"/></svg>
<div class="a" style="letter-spacing:0.12px;left:504px;top:266px;color:#fff">Termine</div>
<svg style="left:601px;top:266px" width="14" height="14" viewBox="0 0 14 14"><path d="M7.6 7.6 L13 12.8" stroke="#f0a020" stroke-width="1.3"/><circle cx="5" cy="5" r="4.3" fill="#fff"/></svg>
<div class="a" style="letter-spacing:0.09px;left:620px;top:266px;color:#fff">Suchfenster</div>
<div class="b white" style="left:243px;top:284px;width:483px;height:132px"></div>
<div class="b" style="left:243px;top:284px;width:466px;height:23px;background:#fcfcfc"></div>
<div class="b" style="left:243px;top:308px;width:466px;height:17px;background:#f6f6f6"></div>
<div class="b" style="left:243px;top:344px;width:466px;height:17px;background:#f6f6f6"></div>
<div class="b" style="left:243px;top:380px;width:466px;height:17px;background:#f6f6f6"></div>
<div class="b" style="left:243px;top:307px;width:466px;height:1px;background:#dbe7f6"></div>
<div class="b" style="left:243px;top:325px;width:466px;height:1px;background:#e4e4e4"></div>
<div class="b" style="left:243px;top:343px;width:466px;height:1px;background:#e4e4e4"></div>
<div class="b" style="left:243px;top:361px;width:466px;height:1px;background:#e4e4e4"></div>
<div class="b" style="left:243px;top:379px;width:466px;height:1px;background:#e4e4e4"></div>
<div class="b" style="left:243px;top:397px;width:466px;height:1px;background:#e4e4e4"></div>
<div class="b" style="left:243px;top:415px;width:466px;height:1px;background:#e4e4e4"></div>
<div class="b" style="left:371px;top:284px;width:1px;height:23px;background:#dbe7f6"></div>
<div class="b" style="left:371px;top:307px;width:1px;height:109px;background:#e0e0e0"></div>
<div class="b" style="left:467px;top:284px;width:1px;height:23px;background:#dbe7f6"></div>
<div class="b" style="left:467px;top:307px;width:1px;height:109px;background:#e0e0e0"></div>
<div class="b" style="left:545px;top:284px;width:1px;height:23px;background:#dbe7f6"></div>
<div class="b" style="left:545px;top:307px;width:1px;height:109px;background:#e0e0e0"></div>
<div class="b" style="left:628px;top:284px;width:1px;height:23px;background:#dbe7f6"></div>
<div class="b" style="left:628px;top:307px;width:1px;height:109px;background:#e0e0e0"></div>
<div class="b" style="left:679px;top:284px;width:1px;height:23px;background:#dbe7f6"></div>
<div class="b" style="left:679px;top:307px;width:1px;height:109px;background:#e0e0e0"></div>
<div class="b" style="left:705px;top:284px;width:1px;height:23px;background:#dbe7f6"></div>
<div class="b" style="left:705px;top:307px;width:1px;height:109px;background:#e0e0e0"></div>
<div class="a" style="letter-spacing:-0.27px;left:306px;top:289px;width:60px;text-align:right">Zeit</div>
<div class="a" style="letter-spacing:-0.40px;left:378px;top:289px">Name</div>
<div class="a" style="letter-spacing:-0.40px;left:473px;top:289px">Firma</div>
<div class="a" style="letter-spacing:-0.10px;left:552px;top:289px">Rufnummer</div>
<div class="a" style="letter-spacing:-0.31px;left:614px;top:289px;width:60px;text-align:right">Dauer</div>
<svg style="left:687px;top:289px" width="13" height="14" viewBox="0 0 13 14"><path d="M1.4 1.4 C3.2 0.2 4.8 0.6 6.4 1.6 C8.2 2.8 10 2.4 12 1 V8 C10 9.4 8.2 9.8 6.4 8.6 C4.8 7.6 3.2 7.2 1.4 8.4 Z" fill="#a4a4a4" stroke="#555" stroke-width="0.8"/><path d="M1 0.4 V14" stroke="#3a3a3a" stroke-width="1.2"/></svg>
<svg style="left:250px;top:312px" width="11" height="10" viewBox="0 0 12 11"><path d="M1.4 10 L7.4 4" stroke="#f02410" stroke-width="3.2" fill="none"/><path d="M2.2 0.4 H11.4 V9.6 Z" fill="#f02410"/></svg>
<div class="a" style="letter-spacing:0.16px;left:270px;top:309px;width:96px;text-align:right">Do 19.08. 12:42</div>
<div class="a" style="letter-spacing:-0.29px;left:378px;top:309px">Mustermann</div>
<div class="a" style="letter-spacing:-0.03px;left:473px;top:309px">Muster AG</div>
<div class="a" style="letter-spacing:-0.05px;left:551px;top:309px">03727204</div>
<div class="a" style="letter-spacing:0.04px;left:604px;top:309px;width:71px;text-align:right">00:00</div>
<svg style="left:687px;top:311px" width="13" height="14" viewBox="0 0 13 14"><path d="M1.4 1.4 C3.2 0.2 4.8 0.6 6.4 1.6 C8.2 2.8 10 2.4 12 1 V8 C10 9.4 8.2 9.8 6.4 8.6 C4.8 7.6 3.2 7.2 1.4 8.4 Z" fill="#e2e2e2" stroke="#d2d2d2" stroke-width="0.8"/><path d="M1 0.4 V14" stroke="#c0c0c0" stroke-width="1.2"/></svg>
<svg style="left:250px;top:330px" width="11" height="10" viewBox="0 0 12 11"><path d="M1.4 10 L7.4 4" stroke="#f02410" stroke-width="3.2" fill="none"/><path d="M2.2 0.4 H11.4 V9.6 Z" fill="#f02410"/></svg>
<div class="a" style="letter-spacing:0.16px;left:270px;top:327px;width:96px;text-align:right">Do 19.08. 12:41</div>
<div class="a" style="letter-spacing:-0.22px;left:378px;top:327px">Flohr Ilona</div>
<div class="a" style="letter-spacing:-0.37px;left:551px;top:327px">104</div>
<div class="a" style="letter-spacing:0.04px;left:604px;top:327px;width:71px;text-align:right">00:00</div>
<svg style="left:687px;top:329px" width="13" height="14" viewBox="0 0 13 14"><path d="M1.4 1.4 C3.2 0.2 4.8 0.6 6.4 1.6 C8.2 2.8 10 2.4 12 1 V8 C10 9.4 8.2 9.8 6.4 8.6 C4.8 7.6 3.2 7.2 1.4 8.4 Z" fill="#08c408" stroke="#0a8a0a" stroke-width="0.8"/><path d="M1 0.4 V14" stroke="#2a2a2a" stroke-width="1.2"/></svg>
<svg style="left:250px;top:348px" width="11" height="11" viewBox="0 0 12 12"><path d="M1.4 1.2 L7.4 7.2" stroke="#108c10" stroke-width="3.2" fill="none"/><path d="M2.2 11.4 H11.4 V2.2 Z" fill="#108c10"/></svg>
<div class="a" style="letter-spacing:0.16px;left:270px;top:345px;width:96px;text-align:right">Do 19.08. 12:40</div>
<div class="a" style="letter-spacing:-0.22px;left:378px;top:345px">Flohr Ilona</div>
<div class="a" style="letter-spacing:-0.37px;left:551px;top:345px">104</div>
<div class="a" style="letter-spacing:0.04px;left:604px;top:345px;width:71px;text-align:right">00:03</div>
<svg style="left:687px;top:347px" width="13" height="14" viewBox="0 0 13 14"><path d="M1.4 1.4 C3.2 0.2 4.8 0.6 6.4 1.6 C8.2 2.8 10 2.4 12 1 V8 C10 9.4 8.2 9.8 6.4 8.6 C4.8 7.6 3.2 7.2 1.4 8.4 Z" fill="#e2e2e2" stroke="#d2d2d2" stroke-width="0.8"/><path d="M1 0.4 V14" stroke="#c0c0c0" stroke-width="1.2"/></svg>
<svg style="left:248px;top:364px" width="14" height="14" viewBox="0 0 14 14"><path d="M4.6 7 V12.6 H13.2 V8.6 H8.6 V7" fill="#fff" stroke="#f01010" stroke-width="1.5"/><path d="M6.6 0.6 L0.2 7.4 H13 Z" fill="#f01010"/></svg>
<div class="a" style="letter-spacing:0.16px;left:270px;top:363px;width:96px;text-align:right">Do 19.08. 12:39</div>
<div class="a" style="letter-spacing:-0.37px;left:378px;top:363px;font-weight:bold">Bea Elke</div>
<div class="a" style="letter-spacing:0.38px;left:551px;top:363px;font-weight:bold">110</div>
<div class="a" style="letter-spacing:0.28px;left:604px;top:363px;width:71px;text-align:right;font-weight:bold">00:00</div>
<svg style="left:687px;top:365px" width="14" height="12" viewBox="0 0 14 12"><path d="M1.2 6.8 L4.8 10.6 L13 1.6" fill="none" stroke="#18a018" stroke-width="2.6"/></svg>
<svg style="left:250px;top:384px" width="11" height="11" viewBox="0 0 12 12"><path d="M1.4 1.2 L7.4 7.2" stroke="#108c10" stroke-width="3.2" fill="none"/><path d="M2.2 11.4 H11.4 V2.2 Z" fill="#108c10"/></svg>
<div class="a" style="letter-spacing:0.16px;left:270px;top:381px;width:96px;text-align:right">Do 19.08. 12:30</div>
<div class="a" style="letter-spacing:-0.29px;left:378px;top:381px">Mustermann</div>
<div class="a" style="letter-spacing:-0.03px;left:473px;top:381px">Muster AG</div>
<div class="a" style="letter-spacing:-0.05px;left:551px;top:381px">03727204</div>
<div class="a" style="letter-spacing:0.04px;left:604px;top:381px;width:71px;text-align:right">03:26</div>
<svg style="left:686px;top:382px" width="14" height="14" viewBox="0 0 14 14"><circle cx="7" cy="7" r="6.6" fill="#3838ff"/><path d="M7 2.8 V8" stroke="#fff" stroke-width="2"/><circle cx="7" cy="10.6" r="1.2" fill="#fff"/></svg>
<svg style="left:250px;top:402px" width="11" height="11" viewBox="0 0 12 12"><path d="M1.4 1.2 L7.4 7.2" stroke="#108c10" stroke-width="3.2" fill="none"/><path d="M2.2 11.4 H11.4 V2.2 Z" fill="#108c10"/></svg>
<div class="a" style="letter-spacing:0.16px;left:270px;top:399px;width:96px;text-align:right">Do 19.08. 12:27</div>
<div class="a" style="letter-spacing:0.02px;left:378px;top:399px">Steve B.</div>
<div class="a" style="letter-spacing:-0.37px;left:551px;top:399px">103</div>
<div class="a" style="letter-spacing:0.04px;left:604px;top:399px;width:71px;text-align:right">00:01</div>
<svg style="left:687px;top:401px" width="13" height="14" viewBox="0 0 13 14"><path d="M1.4 1.4 C3.2 0.2 4.8 0.6 6.4 1.6 C8.2 2.8 10 2.4 12 1 V8 C10 9.4 8.2 9.8 6.4 8.6 C4.8 7.6 3.2 7.2 1.4 8.4 Z" fill="#f41818" stroke="#b01010" stroke-width="0.8"/><path d="M1 0.4 V14" stroke="#2a2a2a" stroke-width="1.2"/></svg>
<div class="b" style="left:709px;top:284px;width:17px;height:132px;background:#f0f0f0"></div>
<div class="b" style="left:710px;top:312px;width:15px;height:66px;background:#c6c6c6"></div>
<svg style="left:713px;top:290px" width="9" height="6" viewBox="0 0 9 6"><path d="M1 5.4 L4.5 1.8 L8 5.4" fill="none" stroke="#4a4a4a" stroke-width="2"/></svg>
<svg style="left:713px;top:405px" width="9" height="6" viewBox="0 0 9 6"><path d="M1 0.6 L4.5 4.2 L8 0.6" fill="none" stroke="#4a4a4a" stroke-width="2"/></svg>
<div class="b hdr hdl" style="left:243px;top:426px;width:481px;height:18px"></div>
<svg style="left:249px;top:428px" width="15" height="16" viewBox="0 0 15 16"><rect x="1" y="1" width="13" height="14" rx="0.8" fill="#ffdf5c" stroke="#8a4a12" stroke-width="1"/><path d="M3 5.5 H7.6 M3 8 H7 M3 10.5 H6.2" stroke="#6a3a10" stroke-width="1.1"/><path d="M11.2 4 L8.4 11.6" stroke="#6a3a10" stroke-width="1.8" stroke-linecap="round"/></svg>
<div class="a hdrt" style="letter-spacing:-0.18px;left:269.5px;top:429px">Notizen</div>
<div class="b" style="left:243px;top:447px;width:483px;height:22px;background:#e6e6e6"></div>
<div class="b" style="left:243px;top:447px;width:92px;height:22px;background:#c8c8c8"></div>
<div class="b white" style="left:335px;top:447px;width:189px;height:22px"></div>
<div class="b" style="left:524px;top:447px;width:92px;height:22px;background:#c8c8c8"></div>
<div class="b white" style="left:243px;top:469px;width:483px;height:74px"></div>
<svg style="left:252px;top:451px" width="12" height="13" viewBox="0 0 12 13"><rect x="0.6" y="0.6" width="10.8" height="11.8" fill="#eee" stroke="#333" stroke-width="1.1"/><path d="M2.6 3.5 H9.4 M2.6 5.5 H9.4 M2.6 7.5 H9.4 M2.6 9.5 H9.4" stroke="#333" stroke-width="1"/></svg>
<div class="a" style="letter-spacing:0.12px;left:268px;top:450px;color:#111">Allgemein</div>
<svg style="left:346px;top:452px" width="10" height="13" viewBox="0 0 10 13"><path d="M0.7 12.4 L1.6 9.4 C2 7.6 3.2 6.8 5 6.8 C6.8 6.8 8 7.6 8.4 9.4 L9.3 12.4 Z" fill="#b2b2b2" stroke="#333" stroke-width="1"/><ellipse cx="5" cy="3.6" rx="2.5" ry="3" fill="#b2b2b2" stroke="#333" stroke-width="1"/></svg>
<div class="a" style="letter-spacing:0.34px;left:361px;top:450px;color:#111">Mustermann  /  Muster AG</div>
<svg style="left:535px;top:451px" width="7" height="14" viewBox="0 0 7 14"><path d="M3.2 0.6 H5.2 Q6 0.6 6 1.3 V3 Q6 3.7 5.3 3.8 Q3.9 4 3.9 5.4 V8 Q3.9 9.4 5.3 9.6 Q6 9.7 6 10.4 V12.1 Q6 12.9 5.2 12.9 H3.2 Q1.4 11 1.4 6.8 Q1.4 2.4 3.2 0.6 Z" fill="#c4c4c4" stroke="#333" stroke-width="1.1"/></svg>
<div class="a" style="letter-spacing:0.01px;left:550px;top:450px;color:#111">03727204</div>
<div class="a" style="letter-spacing:0.13px;left:244px;top:470px;line-height:14px;color:#000">20.06.2016, 15.40:  CTI-Installation erfolgt am Dienstag 21.06.2016 14:00 Uhr,</div>
<div class="a" style="letter-spacing:0.19px;left:244px;top:484px;line-height:14px;color:#000">Projektunterlagen: {{<span style="color:#0000e6;text-decoration:underline">H:\\Projekte\CTI\Muster-AG</span>}}</div>

</body>
</html>
